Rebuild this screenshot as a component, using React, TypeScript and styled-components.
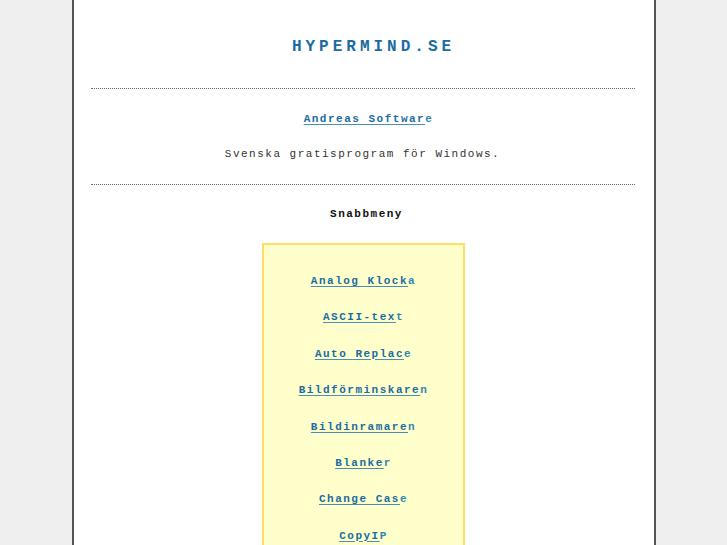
import React from "react";
import styled, { createGlobalStyle } from "styled-components";

const Global = createGlobalStyle`
  html, body { margin: 0; padding: 0; background: #efefef; overflow: hidden; }
  body { font-family: "Liberation Mono", "Courier New", monospace; }
`;

const Column = styled.div`
  width: 584px;
  box-sizing: border-box;
  margin: 0 auto;
  min-height: 545px;
  background: #ffffff;
  border-left: 2px solid #555555;
  border-right: 2px solid #555555;
  padding: 37px 19px 40px 17px;
  display: flex;
  flex-direction: column;
  align-items: center;
`;

const Title = styled.h1`
  margin: 0;
  font-size: 16px;
  line-height: 20px;
  font-weight: bold;
  letter-spacing: 4px;
  color: #1b6ca0;
  padding-left: 22px;
`;

const Rule = styled.hr<{ $top: number }>`
  align-self: stretch;
  margin: ${(p) => p.$top}px 0 0;
  border: 0;
  border-top: 1px dotted #666666;
  height: 0;
`;

const Line = styled.p<{ $top: number; $bold?: boolean; $shift?: number }>`
  margin: ${(p) => p.$top}px 0 0;
  padding-left: ${(p) => p.$shift ?? 0}px;
  font-size: 11px;
  line-height: 14px;
  letter-spacing: 1.5px;
  color: ${(p) => (p.$bold ? "#111111" : "#333333")};
  font-weight: ${(p) => (p.$bold ? "bold" : "normal")};
`;

const LinkText = styled.a`
  color: #1b6ca0;
  font-weight: bold;
  text-decoration: none;
  font-size: 11px;
  line-height: 14px;
  letter-spacing: 1.5px;
`;

const Under = styled.span`
  text-decoration: underline;
  text-decoration-color: #4b8fb8;
  text-underline-offset: 2px;
`;

const Tail = styled.span`
  color: #2f86b3;
`;

const Menu = styled.div`
  margin: 22px 0 0 2px;
  width: 203px;
  box-sizing: border-box;
  background: #ffffcc;
  border: 2px solid #ffdd66;
  padding: 29px 0 40px;
  display: flex;
  flex-direction: column;
  align-items: center;
  gap: 22.4px;
`;

const Link = ({ text }: { text: string }) => (
  <LinkText href="#">
    <Under>{text.slice(0, -1)}</Under>
    <Tail>{text.slice(-1)}</Tail>
  </LinkText>
);

const items = [
  "Analog Klocka",
  "ASCII-text",
  "Auto Replace",
  "Bildförminskaren",
  "Bildinramaren",
  "Blanker",
  "Change Case",
  "CopyIP",
];

export default function App() {
  return (
    <>
      <Global />
      <Column>
        <Title>HYPERMIND.SE</Title>
        <Rule $top={31} />
        <Line $top={23} $shift={12}>
          <Link text="Andreas Software" />
        </Line>
        <Line $top={21}>Svenska gratisprogram för Windows.</Line>
        <Rule $top={23} />
        <Line $top={22} $bold $shift={8}>
          Snabbmeny
        </Line>
        <Menu>
          {items.map((t) => (
            <Link key={t} text={t} />
          ))}
        </Menu>
      </Column>
    </>
  );
}
